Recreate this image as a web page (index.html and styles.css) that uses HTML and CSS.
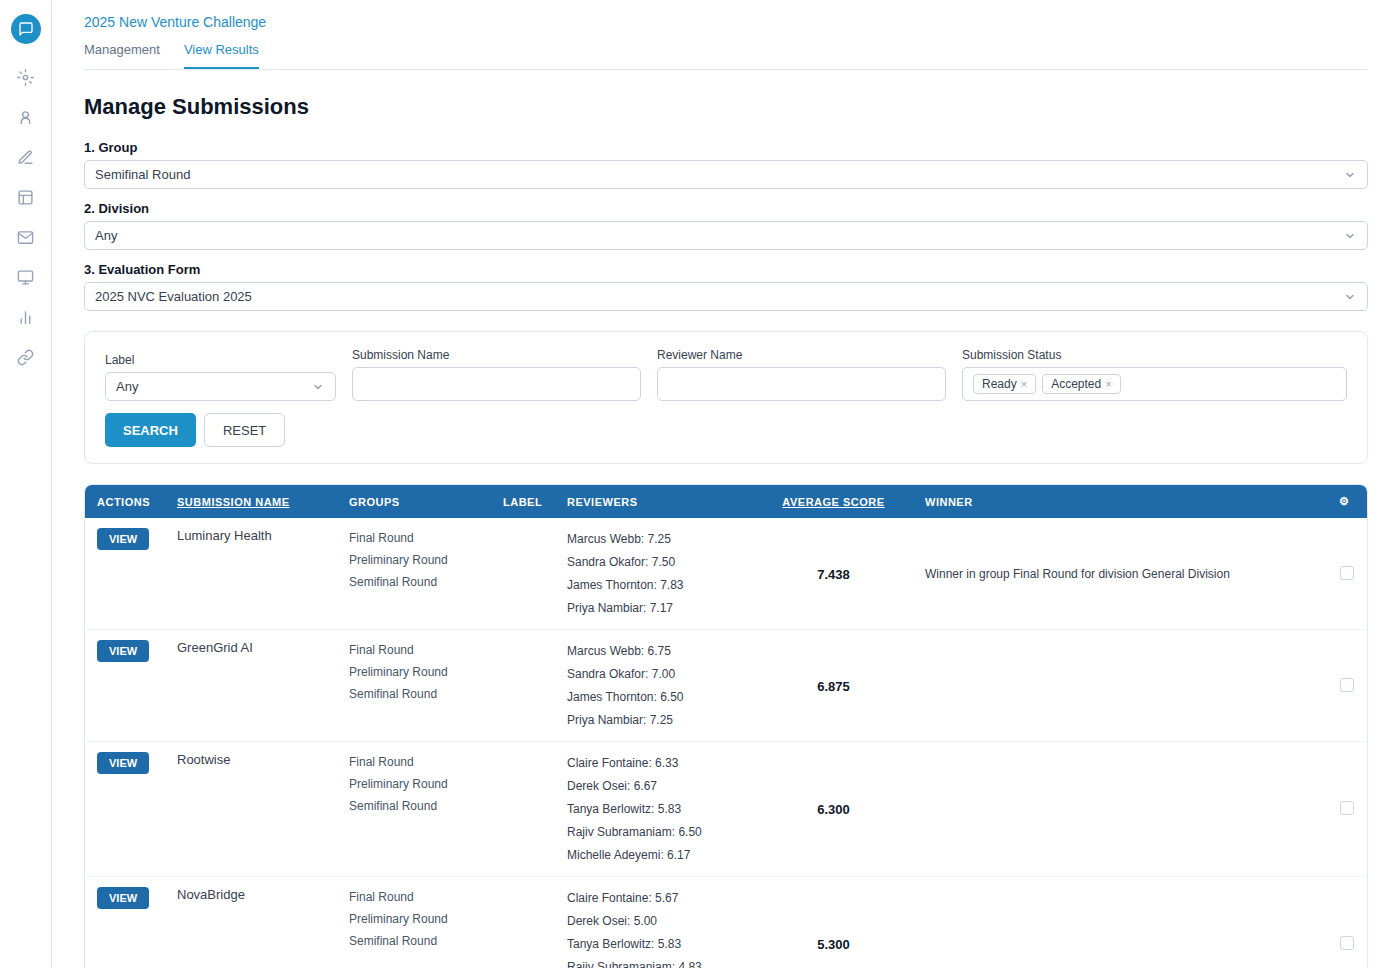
FILE: index.html
```html
<!DOCTYPE html>
<html lang="en">
<head>
<meta charset="utf-8">
<title>Manage Submissions</title>
<link rel="stylesheet" href="styles.css">
</head>
<body>
<div class="shell">
  <nav class="sidebar">
    <a class="logo" href="#"><svg class="logo-icon" viewBox="0 0 24 24"><path d="M21 15a2 2 0 0 1-2 2H7l-4 4V5a2 2 0 0 1 2-2h14a2 2 0 0 1 2 2z"/></svg></a>
    <a class="nav-item" href="#"><svg class="icon" viewBox="0 0 24 24"><circle cx="12" cy="12" r="3"/><path d="M12 1v3M12 20v3M1 12h3M20 12h3M4.200 4.200l2.100 2.100M17.700 17.700l2.100 2.100"/></svg></a>
    <a class="nav-item" href="#"><svg class="icon" viewBox="0 0 24 24"><circle cx="12" cy="8" r="4"/><path d="M6 20v-1c0-4 2-6 6-6s6 2 6 6v1"/></svg></a>
    <a class="nav-item" href="#"><svg class="icon" viewBox="0 0 24 24"><path d="M12 20h9"/><path d="M16.500 3.500a2.120 2.120 0 0 1 3 3L7 19l-4 1 1-4z"/></svg></a>
    <a class="nav-item" href="#"><svg class="icon" viewBox="0 0 24 24"><rect x="3" y="3" width="18" height="18" rx="2"/><path d="M3 9h18M9 21V9"/></svg></a>
    <a class="nav-item" href="#"><svg class="icon" viewBox="0 0 24 24"><rect x="2" y="4" width="20" height="16" rx="2"/><path d="M22 6l-10 7L2 6"/></svg></a>
    <a class="nav-item" href="#"><svg class="icon" viewBox="0 0 24 24"><rect x="2" y="3" width="20" height="14" rx="2"/><path d="M8 21h8M12 17v4"/></svg></a>
    <a class="nav-item" href="#"><svg class="icon" viewBox="0 0 24 24"><path d="M18 20V10M12 20V4M6 20v-6"/></svg></a>
    <a class="nav-item" href="#"><svg class="icon" viewBox="0 0 24 24"><path d="M10 13a5 5 0 0 0 7.540.54l3-3a5 5 0 0 0-7.070-7.070l-1.720 1.710"/><path d="M14 11a5 5 0 0 0-7.540-.54l-3 3a5 5 0 0 0 7.070 7.070l1.710-1.710"/></svg></a>
  </nav>

  <main class="main">
    <a class="crumb" href="#">2025 New Venture Challenge</a>
    <div class="tabs">
      <a class="tab" href="#">Management</a>
      <a class="tab tab-active" href="#">View Results</a>
    </div>

    <h1 class="title">Manage Submissions</h1>

    <form>
      <div class="field">
        <label class="field-label" for="group">1. Group</label>
        <select class="select" id="group"><option>Semifinal Round</option></select>
      </div>
      <div class="field">
        <label class="field-label" for="division">2. Division</label>
        <select class="select" id="division"><option>Any</option></select>
      </div>
      <div class="field">
        <label class="field-label" for="evaluation">3. Evaluation Form</label>
        <select class="select" id="evaluation"><option>2025 NVC Evaluation 2025</option></select>
      </div>

      <section class="filters">
        <div class="filter-row">
          <div class="filter">
            <label class="filter-label" for="label">Label</label>
            <select class="select" id="label"><option>Any</option></select>
          </div>
          <div class="filter">
            <label class="filter-label" for="submission">Submission Name</label>
            <input class="input" id="submission" type="text">
          </div>
          <div class="filter">
            <label class="filter-label" for="reviewer">Reviewer Name</label>
            <input class="input" id="reviewer" type="text">
          </div>
          <div class="filter">
            <span class="filter-label" id="status">Submission Status</span>
            <div class="input tags" role="group" aria-labelledby="status">
              <span class="tag">Ready <button class="tag-x" type="button">×</button></span>
              <span class="tag">Accepted <button class="tag-x" type="button">×</button></span>
            </div>
          </div>
        </div>
        <div class="buttons">
          <button class="btn btn-primary" type="button">SEARCH</button>
          <button class="btn" type="button">RESET</button>
        </div>
      </section>
    </form>

    <div class="table-card">
      <table class="table">
        <colgroup><col class="c-actions"><col class="c-name"><col class="c-groups"><col class="c-label"><col class="c-reviewers"><col class="c-score"><col class="c-winner"><col class="c-check"></colgroup>
        <thead>
          <tr>
            <th>ACTIONS</th>
            <th><a class="sort" href="#">SUBMISSION NAME</a></th>
            <th>GROUPS</th>
            <th>LABEL</th>
            <th>REVIEWERS</th>
            <th class="center"><a class="sort" href="#">AVERAGE SCORE</a></th>
            <th>WINNER</th>
            <th>⚙</th>
          </tr>
        </thead>
        <tbody>
          <tr>
            <td><button class="view" type="button">VIEW</button></td>
            <td>Luminary Health</td>
            <td class="groups">Final Round<br>Preliminary Round<br>Semifinal Round</td>
            <td></td>
            <td class="reviewers">Marcus Webb: 7.25<br>Sandra Okafor: 7.50<br>James Thornton: 7.83<br>Priya Nambiar: 7.17</td>
            <td class="score">7.438</td>
            <td class="winner">Winner in group Final Round for division General Division</td>
            <td class="pick"><input class="check" type="checkbox" aria-label="Luminary Health"></td>
          </tr>
          <tr>
            <td><button class="view" type="button">VIEW</button></td>
            <td>GreenGrid AI</td>
            <td class="groups">Final Round<br>Preliminary Round<br>Semifinal Round</td>
            <td></td>
            <td class="reviewers">Marcus Webb: 6.75<br>Sandra Okafor: 7.00<br>James Thornton: 6.50<br>Priya Nambiar: 7.25</td>
            <td class="score">6.875</td>
            <td class="winner"></td>
            <td class="pick"><input class="check" type="checkbox" aria-label="GreenGrid AI"></td>
          </tr>
          <tr>
            <td><button class="view" type="button">VIEW</button></td>
            <td>Rootwise</td>
            <td class="groups">Final Round<br>Preliminary Round<br>Semifinal Round</td>
            <td></td>
            <td class="reviewers">Claire Fontaine: 6.33<br>Derek Osei: 6.67<br>Tanya Berlowitz: 5.83<br>Rajiv Subramaniam: 6.50<br>Michelle Adeyemi: 6.17</td>
            <td class="score">6.300</td>
            <td class="winner"></td>
            <td class="pick"><input class="check" type="checkbox" aria-label="Rootwise"></td>
          </tr>
          <tr>
            <td><button class="view" type="button">VIEW</button></td>
            <td>NovaBridge</td>
            <td class="groups">Final Round<br>Preliminary Round<br>Semifinal Round</td>
            <td></td>
            <td class="reviewers">Claire Fontaine: 5.67<br>Derek Osei: 5.00<br>Tanya Berlowitz: 5.83<br>Rajiv Subramaniam: 4.83<br>Michelle Adeyemi: 5.17</td>
            <td class="score">5.300</td>
            <td class="winner"></td>
            <td class="pick"><input class="check" type="checkbox" aria-label="NovaBridge"></td>
          </tr>
        </tbody>
      </table>
    </div>
  </main>
</div>
</body>
</html>
```
FILE: styles.css
```css
* { box-sizing: border-box; }

body {
  margin: 0;
  background: #fff;
  color: #374151;
  font-family: "Liberation Sans", Arial, sans-serif;
  font-size: 13px;
  line-height: 15px;
}

a { color: inherit; text-decoration: none; }

button, input, select { font-family: inherit; }

.shell { display: flex; height: 100vh; }

/* Sidebar */
.sidebar {
  display: flex;
  flex: none;
  flex-direction: column;
  align-items: center;
  gap: 4px;
  width: 52px;
  padding-top: 14px;
  border-right: 1px solid #e2e8f0;
}

.logo {
  display: grid;
  place-items: center;
  width: 30px;
  height: 30px;
  margin-bottom: 11px;
  border-radius: 50%;
  background: #1e90c8;
}

.logo-icon, .icon {
  width: 17px;
  height: 17px;
  fill: none;
  stroke: #94a3b8;
  stroke-width: 2;
  stroke-linecap: round;
  stroke-linejoin: round;
}

.logo-icon { width: 16px; height: 16px; stroke: #fff; }

.nav-item {
  display: grid;
  place-items: center;
  width: 36px;
  height: 36px;
}

/* Page header */
.main {
  flex: 1;
  min-width: 0;
  padding: 14px 32px 32px;
  overflow-y: auto;
  scrollbar-width: none;
}

.crumb {
  display: block;
  color: #1e90c8;
  font-size: 14px;
  line-height: 16px;
}

.tabs {
  display: flex;
  gap: 24px;
  margin-top: 12px;
  border-bottom: 1px solid #e2e8f0;
}

.tab {
  padding-bottom: 10px;
  border-bottom: 2px solid transparent;
  color: #64748b;
}

.tab-active { border-color: #1e90c8; color: #1e90c8; }

.title {
  margin: 24px 0 20px;
  color: #0f172a;
  font-size: 22px;
  line-height: 26px;
}

/* Form controls */
.field { margin-bottom: 12px; }

.field-label {
  display: block;
  margin-bottom: 5px;
  color: #0f172a;
  font-weight: 700;
}

.select, .input {
  display: block;
  width: 100%;
  border: 1px solid #cbd5e1;
  border-radius: 5px;
  background: #fff;
  color: #374151;
  font-size: 13px;
}

.select {
  height: 29px;
  padding: 0 10px;
  appearance: none;
  background-image: url("data:image/svg+xml,%3Csvg xmlns='http://www.w3.org/2000/svg' viewBox='0 0 24 24' fill='none' stroke='%2394a3b8' stroke-width='3' stroke-linecap='round' stroke-linejoin='round'%3E%3Cpath d='M6 9l6 6 6-6'/%3E%3C/svg%3E");
  background-position: right 11px center;
  background-repeat: no-repeat;
  background-size: 12px 12px;
}

.input { height: 34px; padding: 0 10px; }

/* Filters */
.filters {
  margin: 20px 0;
  padding: 16px 20px;
  border: 1px solid #e2e8f0;
  border-radius: 8px;
}

.filter-row {
  display: grid;
  grid-template-columns: 231fr 289fr 289fr 385fr;
  align-items: end;
  gap: 16px;
}

.filter-label {
  display: block;
  margin-bottom: 5px;
  font-size: 12px;
  line-height: 14px;
}

.tags { display: flex; align-items: center; gap: 6px; }

.tag {
  display: flex;
  align-items: center;
  gap: 4px;
  height: 20px;
  padding: 0 8px;
  border: 1px solid #cbd5e1;
  border-radius: 4px;
  font-size: 12px;
}

.tag-x {
  padding: 0;
  border: 0;
  background: none;
  color: #94a3b8;
  font-size: 11px;
}

.buttons { display: flex; gap: 8px; margin-top: 12px; }

.btn {
  height: 34px;
  padding: 0 18px;
  border: 1px solid #cbd5e1;
  border-radius: 5px;
  background: #fff;
  color: #374151;
  font-size: 13px;
}

.btn-primary {
  border: 0;
  background: #1e90c8;
  color: #fff;
  font-weight: 700;
}

/* Results table */
.table-card {
  overflow: hidden;
  border: 1px solid #e2e8f0;
  border-radius: 8px;
}

.table { width: 100%; border-collapse: collapse; table-layout: fixed; }

.c-actions { width: 80px; }
.c-name { width: 172px; }
.c-groups { width: 154px; }
.c-label { width: 64px; }
.c-reviewers { width: 199px; }
.c-score { width: 159px; }
.c-winner { width: 414px; }
.c-check { width: 40px; }

th {
  padding: 10px 12px;
  background: #1f6aa8;
  color: #fff;
  font-size: 11px;
  line-height: normal;
  letter-spacing: 0.5px;
  text-align: left;
  white-space: nowrap;
}

th.center { text-align: center; }

.sort { text-decoration: underline; }

td {
  padding: 10px 12px 9px;
  border-bottom: 1px solid #f1f5f9;
  vertical-align: top;
}

.groups {
  padding-top: 9px;
  color: #475569;
  font-size: 12px;
  line-height: 22px;
}

.reviewers { font-size: 12px; line-height: 23px; }

.score {
  color: #0f172a;
  font-weight: 700;
  text-align: center;
  vertical-align: middle;
}

.winner { font-size: 12px; vertical-align: middle; }

.pick { vertical-align: middle; }

.view {
  display: block;
  height: 22px;
  padding: 0 12px;
  border: 0;
  border-radius: 4px;
  background: #1f6aa8;
  color: #fff;
  font-size: 11px;
  font-weight: 700;
}

.check {
  display: block;
  width: 14px;
  height: 14px;
  margin: 0 auto 3px;
  appearance: none;
  border: 1px solid #cbd5e1;
  border-radius: 3px;
  background: #fff;
}

.check:checked { background: #1e90c8; }
```
